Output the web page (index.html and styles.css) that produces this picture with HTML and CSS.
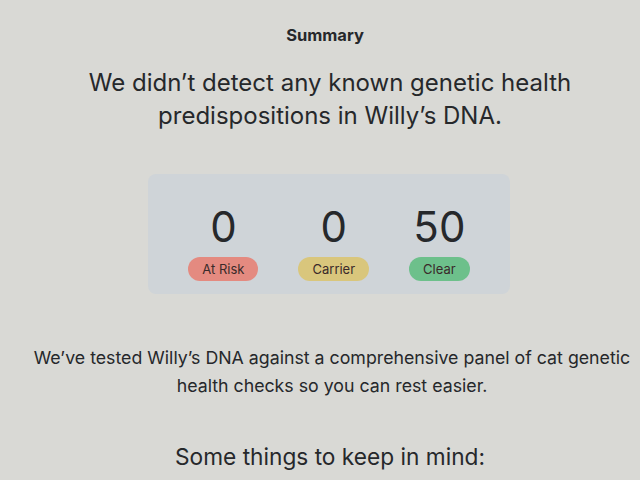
FILE: index.html
```html
<!DOCTYPE html>
<html>
<head>
<meta charset="utf-8">
<link rel="stylesheet" href="styles.css">
</head>
<body>
<main class="page">
  <h2 class="eyebrow">Summary</h2>
  <h1 class="headline">We didn’t detect any known genetic health<br>predispositions in Willy’s DNA.</h1>
  <section class="card">
    <div class="stat">
      <div class="num">0</div>
      <div class="pill risk">At Risk</div>
    </div>
    <div class="stat">
      <div class="num">0</div>
      <div class="pill carrier">Carrier</div>
    </div>
    <div class="stat">
      <div class="num">50</div>
      <div class="pill clear">Clear</div>
    </div>
  </section>
  <p class="body">We’ve tested Willy’s DNA against a comprehensive panel of cat genetic<br>health checks so you can rest easier.</p>
  <h3 class="sub">Some things to keep in mind:</h3>
</main>
</body>
</html>
```

FILE: styles.css
```css
html, body {
  margin: 0;
  padding: 0;
  background: #d9d9d5;
  height: 100%;
  overflow: hidden;
}
.page {
  font-family: Inter, "Open Sans", sans-serif;
  color: #26282b;
  text-align: center;
  padding-top: 24px;
  padding-left: 20px;
}
.eyebrow {
  margin: 0 10px 0 0;
  font-size: 16.5px;
  font-weight: 700;
  line-height: 22px;
}
.headline {
  margin: 20px 0 0;
  font-size: 24px;
  font-weight: 400;
  line-height: 33px;
}
.card {
  margin: 42px auto 0;
  width: 362px;
  height: 120px;
  box-sizing: border-box;
  background: #cfd4d8;
  border-radius: 8px;
  display: flex;
  justify-content: center;
  gap: 40px;
  padding-top: 29px;
  position: relative;
  left: -1px;
}
.stat {
  display: flex;
  flex-direction: column;
  align-items: center;
}
.num {
  font-size: 42px;
  line-height: 48px;
  font-weight: 400;
}
.pill {
  margin-top: 6px;
  font-size: 13px;
  line-height: 24px;
  padding: 0 14px;
  border-radius: 12px;
  color: #3a2a2a;
}
.risk { background: #e48a80; }
.carrier { background: #d9c67c; }
.clear { background: #6dc08b; }
.body {
  margin: 50px 0 0;
  padding-left: 4px;
  font-size: 17.75px;
  line-height: 28px;
}
.sub {
  margin: 43px 0 0;
  font-size: 22.7px;
  font-weight: 400;
  line-height: 28px;
}
```
